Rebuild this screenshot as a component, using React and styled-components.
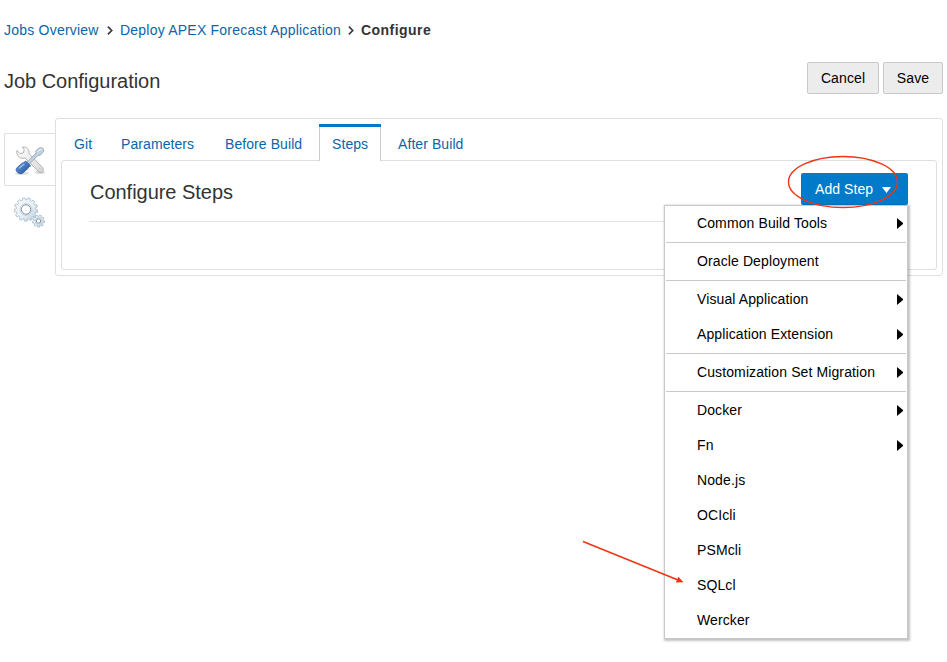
import React from "react";
import styled, { createGlobalStyle, css } from "styled-components";

const GlobalStyle = createGlobalStyle`
  * { box-sizing: border-box; }
  body {
    margin: 0;
    background: #fff;
    color: #333;
    font: 14px/20px "Liberation Sans", Arial, sans-serif;
    letter-spacing: 0.11px;
    overflow: hidden;
  }
`;

const Page = styled.main`
  height: 662px;
  padding: 20px 4px 0;
`;

const Breadcrumbs = styled.nav`
  display: flex;
  align-items: center;
  height: 20px;
`;

const link = css`
  color: #0b65a8;
  text-decoration: none;
  white-space: nowrap;
`;

const Crumb = styled.a`
  ${link}
  width: ${(p) => p.$width}px;
  letter-spacing: 0.22px;
`;

const CurrentCrumb = styled.span`
  color: #333;
  font-weight: bold;
  letter-spacing: 0.45px;
`;

const Chevron = styled.svg`
  flex: none;
  width: 6px;
  height: 9px;
  margin: 0 7px;
`;

const TitleBar = styled.header`
  display: flex;
  justify-content: space-between;
  height: 56px;
  margin-top: 22px;
`;

const PageTitle = styled.h1`
  margin: 8px 0 0;
  font-size: 20px;
  font-weight: normal;
  line-height: 23px;
  letter-spacing: -0.03px;
`;

const Actions = styled.div`
  display: flex;
  gap: 4px;
`;

const Button = styled.button`
  height: 32px;
  padding: 0;
  width: ${(p) => p.$width}px;
  border: 1px solid #c9c9c9;
  border-radius: 2px;
  background: #ececec;
  color: #000;
  font: inherit;
  letter-spacing: 0.11px;
`;

const Workspace = styled.div`
  display: flex;
  align-items: flex-start;
`;

const SideTabs = styled.div`
  width: 51px;
  padding-top: 15px;
`;

const SideTab = styled.div`
  display: flex;
  align-items: center;
  justify-content: center;
  width: 51px;
  height: 53px;
  padding: ${(p) => (p.$active ? 2 : 0)}px 0 0;
  border: 1px solid ${(p) => (p.$active ? "#dfdfdf" : "transparent")};
  border-right: 0;
  border-radius: 2px 0 0 2px;
`;

const Panel = styled.section`
  width: 888px;
  height: 158px;
  padding: 5px;
  border: 1px solid #dfdfdf;
  border-radius: 3px;
`;

const Tabs = styled.div`
  display: flex;
  height: 37px;
`;

const Tab = styled.a`
  ${link}
  height: ${(p) => (p.$active ? 37 : 36)}px;
  width: ${(p) => p.$width}px;
  padding: 10px 0 0 ${(p) => p.$inset || 13}px;
  letter-spacing: 0.08px;
  ${(p) =>
    p.$active &&
    css`
      position: relative;
      padding-left: 12px;
      border: solid #ccc;
      border-width: 0 1px;
      background: #fff;

      &::before {
        content: "";
        position: absolute;
        top: 0;
        right: -1px;
        left: -1px;
        height: 3px;
        background: #007ac9;
      }
    `}
`;

const TabBody = styled.div`
  width: 876px;
  height: 110px;
  margin-top: -1px;
  padding: 12px 28px 0 27px;
  border: 1px solid #dfdfdf;
  border-radius: 3px;
`;

const SectionHead = styled.div`
  display: flex;
  justify-content: space-between;
  height: 49px;
  padding-left: 1px;
  border-bottom: 1px solid #e3e3e3;
`;

const SectionTitle = styled.h2`
  margin: 8px 0 0;
  font-size: 20px;
  font-weight: normal;
  line-height: 23px;
  letter-spacing: -0.03px;
`;

const MenuAnchor = styled.div`
  position: relative;
  height: 32px;
`;

const AddStep = styled.button`
  display: flex;
  align-items: center;
  gap: 9px;
  width: 107px;
  height: 32px;
  padding: 0 0 0 14px;
  border: 0;
  border-radius: 2px;
  background: #007ac9;
  color: #fff;
  font: inherit;
  letter-spacing: 0.08px;
  white-space: nowrap;
`;

const Caret = styled.svg`
  width: 9px;
  height: 6px;
  margin-top: 2px;
`;

const Menu = styled.ul`
  position: absolute;
  z-index: 2;
  top: 32px;
  right: 0;
  width: 244px;
  margin: 0;
  padding: 0 1px;
  border: 1px solid #c9c9c9;
  background: #fff;
  box-shadow: 1px 1px 2px 1px rgba(0, 0, 0, 0.24);
  color: #000;
  list-style: none;
`;

const MenuItem = styled.li`
  display: flex;
  align-items: center;
  justify-content: space-between;
  height: 35px;
  padding: 0 3px 1px 31px;
`;

const Separator = styled.li`
  height: 1px;
  margin: 1px 0;
  background: #c9c9c9;
`;

const Annotation = styled.svg`
  position: absolute;
  z-index: 3;
  top: 0;
  left: 0;
  pointer-events: none;
`;

const CrumbArrow = () => (
  <Chevron viewBox="0 0 6 9">
    <path d="M.9 .7 4.7 4.5.9 8.3" fill="none" stroke="#3c3c3c" strokeWidth="1.7" />
  </Chevron>
);

const ToolsIcon = () => (
  <svg width="32" height="32" viewBox="0 0 32 32">
    <defs>
      <linearGradient id="steel" x1="0" y1="0" x2="1" y2="1">
        <stop offset="0" stopColor="#fff" />
        <stop offset="1" stopColor="#d8d8d8" />
      </linearGradient>
      <linearGradient id="handle" x1="0" y1="0" x2="1" y2="1">
        <stop offset="0" stopColor="#82ace0" />
        <stop offset=".5" stopColor="#4377bd" />
        <stop offset="1" stopColor="#244f96" />
      </linearGradient>
    </defs>
    <ellipse cx="8" cy="28.4" rx="7" ry="1.5" fill="#ccc" opacity=".7" />
    <ellipse cx="26" cy="27.5" rx="5" ry="1.4" fill="#ccc" opacity=".8" />
    <path
      d="M8.3 2c4.6-.5 7.3 2.7 6.7 6.6L28.4 22.3c1.4 1.5 1.2 3.2 0 4.3-1.3 1.3-2.9 1-4.2-.3L11 13c-4.3 1-7.8-1.1-8.2-5.4L3 5.4l3 3.2 3.4-.7.8-3.3Z"
      fill="url(#steel)" stroke="#aaa" strokeWidth=".9"
    />
    <circle cx="26" cy="24.4" r="1.1" fill="#fafafa" stroke="#b5b5b5" strokeWidth=".6" />
    <path d="m13 17.4 9-9.3-.2-2.3 4.2-3.3 3 .9.6 3.1-3.3 3.7-2.2.1-9.2 9.2Z" fill="#c4d1df" stroke="#94a6ba" strokeWidth=".9" />
    <path d="m23.2 7 3-2.7 2 .2" fill="none" stroke="#eff5fa" strokeWidth="1" />
    <path d="m11.7 16 5 4.9c-1.5.4-2.2 1.2-2.4 2.2l-5.6 5c-2.3 1.6-5.7-.5-6.4-2.6-.4-1.2.1-2.2 1-3.1l5.3-4.5c1-.1 2.2-.7 3.1-1.9Z" fill="url(#handle)" stroke="#315f9f" strokeWidth=".9" />
    <path d="m5 23.2 5.3-4.2" stroke="#9fc1e9" strokeWidth="1.2" />
  </svg>
);

const gearOutline = (count, inner, outer) => {
  const step = (Math.PI * 2) / count;
  const points = [];
  for (let i = 0; i < count; i += 1) {
    [
      [-0.32, inner],
      [-0.22, outer],
      [0.22, outer],
      [0.32, inner],
    ].forEach(([offset, radius]) => {
      const angle = (i + offset) * step + 0.15;
      points.push(`${(Math.cos(angle) * radius).toFixed(2)},${(Math.sin(angle) * radius).toFixed(2)}`);
    });
  }
  return points.join(" ");
};

const Gear = ({ cx, cy, inner, outer, hole, count }) => (
  <g transform={`translate(${cx} ${cy})`}>
    <polygon
      points={gearOutline(count, inner, outer)} fill="url(#gearFace)"
      stroke="#a2b9ca" strokeWidth=".8" strokeLinejoin="round"
    />
    <circle r={hole + 1.3} fill="none" stroke="#c6d5e1" strokeWidth="1" />
    <circle r={hole} fill="#fff" stroke="#8796a3" strokeWidth="1" />
  </g>
);

const GearsIcon = () => (
  <svg width="32" height="32" viewBox="0 0 32 32">
    <defs>
      <linearGradient id="gearFace" x1="0" y1="0" x2="1" y2="1">
        <stop offset="0" stopColor="#fafdff" />
        <stop offset=".55" stopColor="#e8f0f6" />
        <stop offset="1" stopColor="#b4cadb" />
      </linearGradient>
    </defs>
    <Gear cx={12} cy={12.5} inner={9.8} outer={11.7} hole={4.7} count={13} />
    <Gear cx={24.5} cy={24} inner={4.6} outer={6.1} hole={2.2} count={9} />
  </svg>
);

const Submenu = () => (
  <svg width="6.5" height="11" viewBox="0 0 6.5 11">
    <path d="M0 0 6.5 5.5 0 11Z" fill="#000" />
  </svg>
);

const tabs = [
  { label: "Git", width: 47 },
  { label: "Parameters", width: 104 },
  { label: "Before Build", width: 107 },
  { label: "Steps", width: 62, active: true },
  { label: "After Build", width: 98, inset: 17 },
];

const groups = [
  [["Common Build Tools", true]],
  [["Oracle Deployment", false]],
  [["Visual Application", true], ["Application Extension", true]],
  [["Customization Set Migration", true]],
  [["Docker", true], ["Fn", true], ["Node.js"], ["OCIcli"], ["PSMcli"], ["SQLcl"], ["Wercker"]],
];

export default function App() {
  return (
    <Page>
      <GlobalStyle />
      <Breadcrumbs>
        <Crumb $width={96}>Jobs Overview</Crumb>
        <CrumbArrow />
        <Crumb $width={221}>Deploy APEX Forecast Application</Crumb>
        <CrumbArrow />
        <CurrentCrumb>Configure</CurrentCrumb>
      </Breadcrumbs>
      <TitleBar>
        <PageTitle>Job Configuration</PageTitle>
        <Actions>
          <Button $width={72}>Cancel</Button>
          <Button $width={60}>Save</Button>
        </Actions>
      </TitleBar>
      <Workspace>
        <SideTabs>
          <SideTab $active><ToolsIcon /></SideTab>
          <SideTab><GearsIcon /></SideTab>
        </SideTabs>
        <Panel>
          <Tabs>
            {tabs.map((t) => (
              <Tab key={t.label} $width={t.width} $active={t.active} $inset={t.inset}>{t.label}</Tab>
            ))}
          </Tabs>
          <TabBody>
            <SectionHead>
              <SectionTitle>Configure Steps</SectionTitle>
              <MenuAnchor>
                <AddStep>
                  Add Step
                  <Caret viewBox="0 0 9 6">
                    <path d="M0 0h9L4.5 6Z" fill="#fff" />
                  </Caret>
                </AddStep>
                <Menu>
                  {groups.map((group, i) => (
                    <React.Fragment key={group[0][0]}>
                      {i > 0 && <Separator />}
                      {group.map(([label, nested]) => (
                        <MenuItem key={label}>
                          {label}
                          {nested && <Submenu />}
                        </MenuItem>
                      ))}
                    </React.Fragment>
                  ))}
                </Menu>
              </MenuAnchor>
            </SectionHead>
          </TabBody>
        </Panel>
      </Workspace>
      <Annotation width="947" height="662" viewBox="0 0 947 662">
        <ellipse cx="843" cy="182" rx="54.5" ry="25.5" fill="none" stroke="#f03412" strokeWidth="1.4" />
        <path d="M583 541.5 678 580" stroke="#f03412" strokeWidth="1.5" />
        <path d="m678.3 576.8 5.3 5.5-7.7.2Z" fill="#f03412" />
      </Annotation>
    </Page>
  );
}
